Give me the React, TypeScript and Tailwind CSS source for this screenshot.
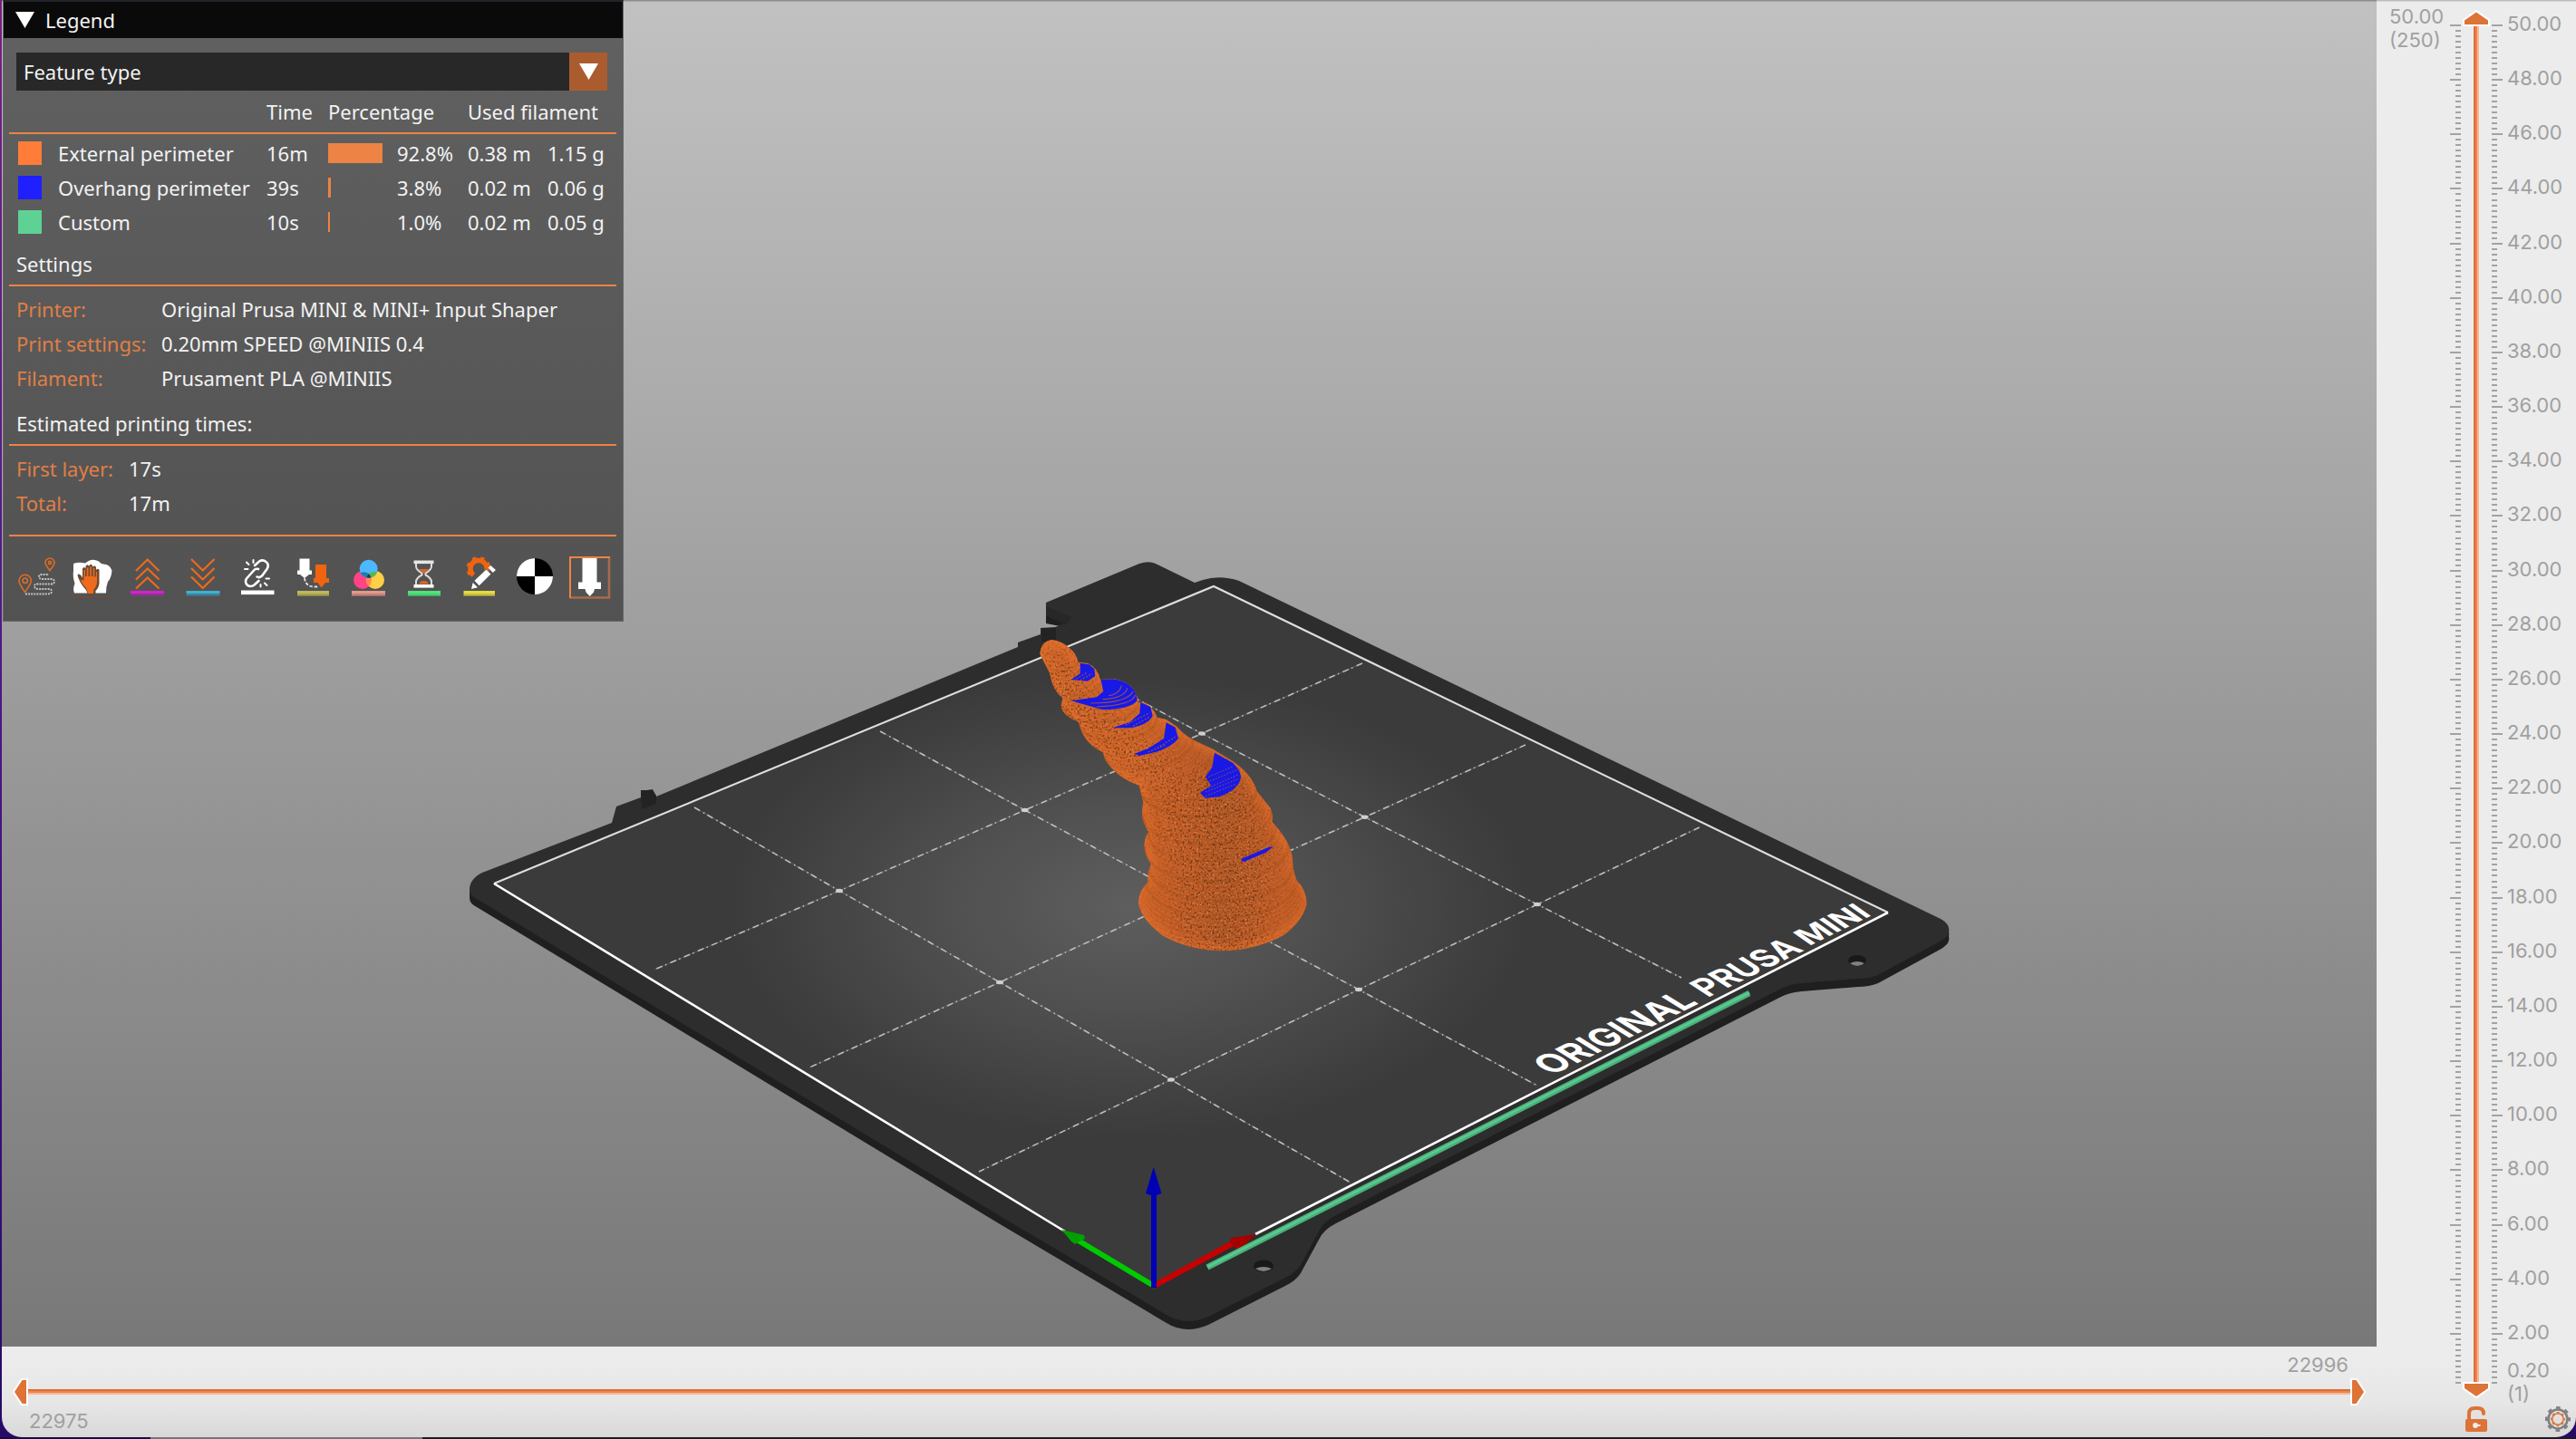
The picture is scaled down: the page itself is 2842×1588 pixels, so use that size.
import React from "react";

const ORANGE = "#ed8344";

/* ---------- toolbar icons (46 x 46 each) ---------- */

function Slot({ children }: { children: React.ReactNode }) {
  return (
    <svg className="h-[46px] w-[46px] shrink-0 overflow-visible" viewBox="0 0 46 46" fill="none">
      {children}
    </svg>
  );
}

function Underline({ top, bottom, x = 4, w = 37 }: { top: string; bottom: string; x?: number; w?: number }) {
  return (
    <>
      <rect x={x} y="38" width={w} height="3" fill={top} />
      <rect x={x} y="41" width={w} height="2.6" fill={bottom} />
    </>
  );
}

function ToolIcons() {
  return (
    <div className="flex gap-[15px]">
      <Slot>
        <g stroke="#dd6c24" strokeWidth="1.6">
          <path d="M9.5 39.5C6 34 3 30.500 3 27a6.700 6.700 0 0 1 13.400 0c0 3.500-3.400 7-6.900 12.500Z" />
          <circle cx="9.700" cy="26.700" r="2.700" />
          <path d="M37 15.500C34.500 12 32 9.500 32 7a5 5 0 0 1 10 0c0 2.500-2.500 5-5 8.500Z" />
          <circle cx="37" cy="7" r="1.600" />
        </g>
        <path
          d="M10 41.500H34q5 0 5-3t-5-2.500H25q-5 0-5-3t4-2.500H38q4 0 4-2.700t-4-2.800H29q-4 0-4-2.500t3-2.500h8"
          stroke="#c4c4c4"
          strokeWidth="1.900"
          strokeDasharray="2 1.100"
        />
      </Slot>
      <Slot>
        <path
          d="M2 8q6-2 13-.5Q22 1 30 5.500q2 2.500 5 3 7 0 9.500 7-.500 8-4.500 12.500-2 5-2 12.500H3Q1 36 3.500 30 1 22 2 16Z"
          fill="#fff"
        />
        <path
          d="M12 25V13.500q1.800-3 3.500 0V11q1.800-3.500 3.700 0v-.6q2-3.400 4 0V12q2-2.800 3.800 0v3q1.900-2.300 3.500 0v14q0 5-4 9v3q-5 2-9 0-1.500-5-5-8-3-4-5-9-2-5 .5-4.500 2.500.5 4 4Z"
          fill="#6b4a33"
        />
        <path
          d="M13.500 23V15h1.500v7h1.700V12.500h1.800V22h1.700V11.500h1.700V22h1.800v-9h1.600v9.500h1.600V17h1.200v10q0 6-3.700 9.500L24 41h-6l-2-6q-5-5-6-9.500l3.500 1Z"
          fill="#ee6a1c"
        />
        <rect x="1" y="44" width="40" height="1.600" fill="#7a4a34" opacity=".7" />
      </Slot>
      <Slot>
        <path d="M10 16 22.700 3.500 35.500 16M10 25.500 22.700 13.500 35.500 25.500M10 35.500 22.700 23.500 35.500 35.500" stroke="#ee6a1c" strokeWidth="2.200" />
        <Underline top="#d321d0" bottom="#8b358e" />
      </Slot>
      <Slot>
        <path d="M10 3 22.700 15.500 35.500 3M10 13 22.700 25.500 35.500 13M10 22.500 22.700 35 35.500 22.500" stroke="#ee6a1c" strokeWidth="2.200" />
        <Underline top="#3fb1cf" bottom="#417f98" x={4.500} />
      </Slot>
      <Slot>
        <g stroke="#fff" strokeWidth="2.600" strokeLinecap="round">
          <path d="m19 10 5-4.500q4-2.500 7.500.500 4 3 1 8L27 21.500q-3 2.500-5.500 1" />
          <path d="M23 14q-3-1-5 1.500L10 24.500q-2.500 4 1 7.300 4 2.500 7.500-.3l5-4.500" />
          <path d="M8 14h3.500M10 6.500l2.500 2.500M17.500 4v3M31.500 24.500H35M30 29.500l2.500 2.500M25.500 31v2.500" strokeWidth="2" />
        </g>
        <rect x="4" y="37.500" width="36.500" height="4.600" fill="#fff" />
      </Slot>
      <Slot>
        <path d="M7.500 2.500h11v13H21V20h-3l-5 4-5-4H5v-4.500h2.500Z" fill="#fff" />
        <path d="M25 9h12v15h3v5h-4L31.500 34.500 27.500 29H23v-5h2Z" fill="#f0640f" />
        <path d="M13 24q1 9 10 9.500h5" stroke="#e4e4e4" strokeWidth="1.900" strokeDasharray="3.500 1.800" />
        <Underline top="#bfb75f" bottom="#a5a24d" x={5} w={35} />
      </Slot>
      <Slot>
        <circle cx="16" cy="26" r="10" fill="#ff4385" />
        <circle cx="30" cy="26" r="10" fill="#ffcf45" />
        <circle cx="22.700" cy="13.800" r="10" fill="#4db8ff" />
        <path d="M22.900 18.800a10 10 0 0 1 .1 14.300 10 10 0 0 1-.1-14.300Z" fill="#ff8a50" />
        <path d="M13.600 18a10 10 0 0 1 9.300 1.100 10 10 0 0 0-2.500 4.400A10 10 0 0 1 13.600 18Z" fill="#1b7fb4" />
        <path d="M32 17.700a10 10 0 0 0-9.100 1.400 10 10 0 0 1 2.500 4.400A10 10 0 0 0 32 17.700Z" fill="#58b94b" />
        <path d="M22.900 19a10 10 0 0 1 2.500 4.500 10 10 0 0 1-5 0 10 10 0 0 1 2.500-4.500Z" fill="#163a5c" />
        <Underline top="#e09a8c" bottom="#c78078" />
      </Slot>
      <Slot>
        <rect x="11.500" y="4.500" width="22" height="3.600" fill="#e6e6e6" />
        <rect x="11.500" y="31" width="22" height="3.600" fill="#fff" />
        <path
          d="M14 8v3q0 4 6.500 7.500v2Q14 24 14 28v3M31 8v3q0 4-6.500 7.500v2Q31 24 31 28v3"
          stroke="#dcdcdc"
          strokeWidth="2"
        />
        <path d="M17 14h11q-2 3-5.500 4.500Q19 17 17 14ZM17 30.500q1-3.300 5.500-3.500 4.500.200 5.500 3.500Z" fill="#d9652a" />
        <Underline top="#4ee37c" bottom="#45d170" x={5} w={36} />
      </Slot>
      <Slot>
        <circle cx="22" cy="13.500" r="9" stroke="#f0640f" strokeWidth="5.500" strokeDasharray="40 17" transform="rotate(128 22 13.500)" />
        <circle cx="22" cy="13.500" r="12.200" stroke="#f0640f" strokeWidth="2.600" strokeDasharray="4.400 5.200 4.400 5.200 4.400 5.200 4.400 5.200 4.400 60" transform="rotate(145 22 13.500)" />
        <path d="m13 37 2.200-8.500L30 13.500l7 6.500-15.500 14.500Z" fill="#555" />
        <path d="m14 36 1.700-7 5.300 5.200ZM17.500 26.800 30.500 14.500l5 5-12.800 12.700ZM32.500 12.500l2.800-2.500 5.700 5-3.200 3Z" fill="#fff" />
        <Underline top="#e3dc3f" bottom="#c9bd45" x={5.500} w={34.500} />
      </Slot>
      <Slot>
        <circle cx="23" cy="22" r="20" fill="#000" />
        <path d="M23 22V2A20 20 0 0 0 3 22ZM23 22v20A20 20 0 0 0 43 22Z" fill="#fff" />
      </Slot>
      <Slot>
        <path d="M44 1v44.500H1" stroke="#a56c4b" strokeWidth="2.600" />
        <path d="M1 46V1h44" stroke={ORANGE} strokeWidth="2" />
        <path d="M14.500 2h16v26.500H35V36h-7l-1 3.500-4.300 4.500-4.200-4.500-1-3.500H10v-7.500h4.500Z" fill="#fff" />
      </Slot>
    </div>
  );
}

/* ---------- legend ---------- */

const features = [
  { swatch: "bg-[#ff7d38]", name: "External perimeter", time: "16m", bar: "w-[60px]", pct: "92.8%", len: "0.38 m", mass: "1.15 g" },
  { swatch: "bg-[#1f1fff]", name: "Overhang perimeter", time: "39s", bar: "w-[3px]", pct: "3.8%", len: "0.02 m", mass: "0.06 g" },
  { swatch: "bg-[#5ed194]", name: "Custom", time: "10s", bar: "w-[2px]", pct: "1.0%", len: "0.02 m", mass: "0.05 g" },
];

const settings = [
  ["Printer:", "Original Prusa MINI & MINI+ Input Shaper"],
  ["Print settings:", "0.20mm SPEED @MINIIS 0.4"],
  ["Filament:", "Prusament PLA @MINIIS"],
];

const times = [
  ["First layer:", "17s"],
  ["Total:", "17m"],
];

function Rule() {
  return <div className="mr-[7px] ml-[6px] h-[2px] bg-[#ed8344]" />;
}

function Legend() {
  return (
    <section className="absolute left-px top-0 flex h-[686px] w-[685px] flex-col border border-[#64646c] border-t-2 border-t-[#23232b] bg-linear-to-b from-[#616161] to-[#525252] font-['Noto_Sans',sans-serif] text-[22px] leading-[36px] text-[#f2f2f2]">
      <header className="flex h-[40px] items-center bg-[#0a0a0a] pb-px pl-[13px]">
        <svg className="h-[18px] w-[21px]" viewBox="0 0 21 18">
          <path d="M0 0h21L10.500 18Z" fill="#fff" />
        </svg>
        <span className="ml-[12px]">Legend</span>
      </header>
      <div className="ml-[14px] mt-[16px] flex h-[42px] w-[652px] items-center bg-[#282828]">
        <span className="flex-1 pl-[8px]">Feature type</span>
        <span className="flex h-full w-[42px] items-center justify-center bg-[#ab5c2f]">
          <svg className="h-[18px] w-[21px]" viewBox="0 0 21 18">
            <path d="M0 0h21L10.500 18Z" fill="#fff" />
          </svg>
        </span>
      </div>
      <div className="mt-[5px] grid h-[41px] grid-cols-[290px_68px_154px_1fr]">
        <span />
        <span>Time</span>
        <span>Percentage</span>
        <span>Used filament</span>
      </div>
      <Rule />
      <div className="mt-[3px]">
        {features.map((f) => (
          <div key={f.name} className="grid h-[38px] grid-cols-[60px_230px_68px_75px_79px_88px_1fr] items-start">
            <span className={`mt-[5px] ml-[16px] h-[26px] w-[26px] ${f.swatch}`} />
            <span>{f.name}</span>
            <span>{f.time}</span>
            <span className={`mt-[7px] h-[22px] bg-[#ed8344] ${f.bar}`} />
            <span className="pl-px">{f.pct}</span>
            <span>{f.len}</span>
            <span>{f.mass}</span>
          </div>
        ))}
      </div>
      <h2 className="mt-[8px] h-[41px] pl-[14px]">Settings</h2>
      <Rule />
      <dl className="mt-[7px]">
        {settings.map(([k, v]) => (
          <div key={k} className="grid h-[38px] grid-cols-[160px_1fr] pl-[14px]">
            <dt className="text-[#e07f45]">{k}</dt>
            <dd>{v}</dd>
          </div>
        ))}
      </dl>
      <h2 className="mt-[12px] h-[41px] pl-[14px]">Estimated printing times:</h2>
      <Rule />
      <dl className="mt-[7px]">
        {times.map(([k, v]) => (
          <div key={k} className="grid h-[38px] grid-cols-[124px_1fr] pl-[14px]">
            <dt className="text-[#e07f45]">{k}</dt>
            <dd>{v}</dd>
          </div>
        ))}
      </dl>
      <div className="h-[15px]" />
      <Rule />
      <div className="mt-[22px] pl-[14px]">
        <ToolIcons />
      </div>
    </section>
  );
}

/* ---------- 3D viewport ---------- */

const PLATE =
  "M518 982Q518 970 532 963L675 908 680 890 707 880V873L720 871 724 879 1123 714V709L1148 700V693L1164 692 1172 689 1180 684 1154 679V665L1257 622Q1268 618 1277 623L1318 643 1327 640Q1346 634 1367 641L1600 753 2141 1014Q2152 1020 2150 1029 2149 1034 2140 1039L2072 1076Q2062 1080 2050 1080L1988 1085Q1975 1086 1965 1091L1474 1341Q1460 1348 1455 1359L1435 1396Q1430 1404 1418 1410L1333 1453Q1308 1464 1287 1451L1100 1340 526 992Q518 988 518 982Z";

const BED = "M545 975 1339 647 2083 1007 1273 1419Z";

const GRID = [
  "M766 891 926 983 1103 1084 1292 1191.500 1490 1305",
  "M971 807 1130.700 894 1309 990 1499 1092 1696 1198",
  "M1163 723 1326 809.500 1505.700 901.700 1696 998 1855 1079",
  "M1503 732 1326 809.500 1130.700 894 926 983 722 1070",
  "M1683 822 1505.700 901.700 1309 990 1103 1084 893 1178",
  "M1875 913 1696 998 1499 1092 1292 1191.500 1080 1293",
];

const NODES = [
  [926, 983], [1103, 1084], [1292, 1191.5], [1130.7, 894], [1499, 1092],
  [1326, 809.5], [1505.7, 901.7], [1696, 998],
];

const MODEL =
  "M142 365Q145 325 180 318 215 322 235 342 262 360 268 392L300 396Q335 412 341 450L390 448Q460 462 468 525L490 526Q520 545 530 575L560 582 595 605Q620 635 660 655L715 680 780 720Q845 765 860 820L905 875Q915 900 910 920 970 985 978 1040 978 1080 992 1115 1025 1145 1025 1195 1010 1250 950 1295 860 1345 745 1348 630 1345 545 1295 475 1240 468 1190 468 1150 500 1120 496 1090 510 1060 485 1030 488 990 492 965 502 955 478 920 480 885L484 855 470 800Q395 775 358 715L350 690Q285 660 270 590 215 570 212 535L218 510Q185 490 175 430Z";

const SECTIONS = [
  [470, 1205, 1025, 1205],
  [492, 1110, 992, 1110],
  [500, 1060, 980, 1060],
  [488, 1000, 965, 990],
  [500, 955, 925, 930],
  [480, 890, 908, 880],
  [470, 800, 858, 810],
  [400, 760, 800, 740],
  [350, 690, 650, 645],
  [270, 590, 530, 575],
  [215, 530, 470, 520],
  [185, 470, 345, 450],
  [165, 400, 270, 385],
  [145, 340, 225, 335],
];

const layerArcs: { d: string; tone: number }[] = [];
SECTIONS.slice(0, -1).forEach((a, i) => {
  const b = SECTIONS[i + 1];
  const steps = Math.max(6, Math.round(Math.abs(b[1] - a[1]) / 7));
  for (let s = 0; s < steps; s++) {
    const t = s / steps;
    const [x1, y1, x2, y2] = a.map((v, k) => v + (b[k] - v) * t);
    const h = (x2 - x1) * 0.34;
    layerArcs.push({
      d: `M${x1.toFixed(1)} ${y1.toFixed(1)}C${x1.toFixed(1)} ${(y1 + h).toFixed(1)} ${x2.toFixed(1)} ${(y2 + h).toFixed(1)} ${x2.toFixed(1)} ${y2.toFixed(1)}`,
      tone: s === 0 ? 2 : s % 2,
    });
  }
});

const SPINE = "M190 420 260 520 400 650 560 780 690 900 740 1040 750 1240";

const OVERHANGS = [
  "M275 395 305 400 322 415 325 438 300 455 245 450 275 430Z",
  "M343 448 385 448Q440 455 460 485L464 520Q440 548 350 550L245 520 330 508 352 488Z",
  "M475 525 508 540 515 570Q500 600 440 610L383 610 440 590 472 562Z",
  "M560 592 590 608 600 645Q580 672 525 690L470 702 455 695 500 678 552 645Z",
  "M720 692 780 725Q812 755 806 780 795 815 735 838L690 842 672 825 708 800 690 772 712 740Z",
  "M806 1045 900 1004 915 1002 890 1022 815 1054Z",
];

function Word({ x, y, len, cx, cy, n, children }: { x: number; y: number; len: number; cx: number; cy: number; n: number; children: string }) {
  const a = len / n;
  return (
    <text
      transform={`matrix(${a} ${-a * 0.49} ${cx / 72.7} ${cy / 72.7} ${x} ${y})`}
      textLength={n}
      lengthAdjust="spacingAndGlyphs"
      fontSize="100"
      fontWeight="700"
      fill="#fff"
      className="font-['Inter',sans-serif]"
    >
      {children}
    </text>
  );
}

function Viewport() {
  return (
    <svg className="block h-[1486px] w-[2620px]" viewBox="2 0 2620 1486" fill="none">
      <defs>
        <linearGradient id="sky" x1="0" y1="0" x2="0" y2="1">
          <stop offset="0" stopColor="#c1c1c1" />
          <stop offset="1" stopColor="#787878" />
        </linearGradient>
        <radialGradient id="glow" gradientUnits="userSpaceOnUse" cx="0" cy="0" r="1" gradientTransform="translate(1245 1000) scale(440 255)">
          <stop offset="0" stopColor="#5e5e5e" />
          <stop offset=".45" stopColor="#505050" />
          <stop offset="1" stopColor="#3b3b3b" />
        </radialGradient>
        <linearGradient id="model" gradientUnits="userSpaceOnUse" x1="470" y1="0" x2="1025" y2="0">
          <stop offset="0" stopColor="#cf652a" />
          <stop offset=".22" stopColor="#c45e28" />
          <stop offset=".5" stopColor="#b25927" />
          <stop offset=".85" stopColor="#c45e28" />
          <stop offset="1" stopColor="#bd5a24" />
        </linearGradient>
        <clipPath id="modelClip">
          <path d={MODEL} />
        </clipPath>
        <filter id="grain" x="0" y="0" width="100%" height="100%" colorInterpolationFilters="sRGB">
          <feTurbulence type="fractalNoise" baseFrequency=".15" numOctaves="1" seed="4" />
          <feColorMatrix values="0 0 0 0 .36  0 0 0 0 .18  0 0 0 0 .07  9 0 0 0 -4.900" />
        </filter>
        <filter id="spark" x="0" y="0" width="100%" height="100%" colorInterpolationFilters="sRGB">
          <feTurbulence type="fractalNoise" baseFrequency=".15" numOctaves="1" seed="19" />
          <feColorMatrix values="0 0 0 0 .86  0 0 0 0 .56  0 0 0 0 .34  0 10 0 0 -6" />
        </filter>
        <filter id="soft" filterUnits="userSpaceOnUse" x="0" y="200" width="1200" height="1300">
          <feGaussianBlur stdDeviation="14" />
        </filter>
        <filter id="feather" filterUnits="userSpaceOnUse" x="0" y="200" width="1200" height="1300">
          <feGaussianBlur stdDeviation="34" />
        </filter>
        <mask id="spineMask" maskUnits="userSpaceOnUse" x="100" y="300" width="950" height="1070">
          <rect x="100" y="300" width="950" height="1070" fill="#303030" />
          <g filter="url(#feather)">
            <path d={SPINE} stroke="#fff" strokeWidth="120" strokeLinejoin="round" strokeLinecap="round" />
            <path d="M690 900 740 1040 750 1240" stroke="#fff" strokeWidth="320" strokeLinecap="round" />
          </g>
        </mask>
      </defs>

      <rect x="2" width="2620" height="1486" fill="url(#sky)" />
      <rect x="2" width="2620" height="1.500" fill="#8b8b8b" />

      <path d={PLATE} fill="#232323" transform="translate(0 4)" />
      <path d={PLATE} fill="#1f1f1f" transform="translate(0 9)" />
      <path d={PLATE} fill="#2d2d2d" />
      <path d="M1154 679V669L1182 681 1176 690Z" fill="#272727" />
      <path d="M1149 693h16v15h-16ZM707 872h13l4 6v9l-16 6Z" fill="#232323" />
      {[
        [1394, 1397, 11],
        [2049, 1060, 10],
      ].map(([x, y, r]) => (
        <g key={x}>
          <ellipse cx={x} cy={y} rx={r} ry={r * 0.6} fill="#191919" />
          <path d={`M${x - r + 2} ${y + 3}q${r - 2}-4 ${2 * r - 4} 0-${r - 2} 6-${2 * r - 4} 0Z`} fill="#808080" />
        </g>
      ))}

      <path d={BED} fill="url(#glow)" />
      {GRID.map((d) => (
        <g key={d}>
          <path d={d} stroke="#8f8f8f" strokeWidth="1.200" strokeOpacity=".35" />
          <path d={d} stroke="#bdbdbd" strokeWidth="1.600" strokeDasharray="7 4.500 1.500 3.500" />
        </g>
      ))}
      {NODES.map(([x, y]) => (
        <ellipse key={x} cx={x} cy={y} rx="4" ry="2.200" fill="#cfcfcf" />
      ))}
      <path d="M545 975 1339 647 2083 1007" stroke="#dedede" strokeWidth="2.100" />
      <path d="M2083 1007 1385 1362M545 975 1175 1359" stroke="#fff" strokeWidth="2.600" />

      <Word x={1712} y={1187} len={163} cx={25} cy={15.5} n={500}>ORIGINAL</Word>
      <Word x={1884} y={1101} len={107} cx={23} cy={15} n={350}>PRUSA</Word>
      <Word x={1996} y={1044} len={70} cx={20} cy={14} n={260}>MINI</Word>

      <g transform="translate(1100 600) scale(.33333)">
        <path d={MODEL} fill="url(#model)" />
        <g clipPath="url(#modelClip)">
          <path d={MODEL} stroke="#ee7631" strokeWidth="34" opacity=".6" filter="url(#soft)" />
          {layerArcs.map((a, i) => (
            <path
              key={i}
              d={a.d}
              stroke={a.tone === 2 ? "#8f4318" : a.tone ? "#dc6a2a" : "#9c4b1c"}
              strokeWidth={a.tone === 2 ? 9 : 3}
              opacity={a.tone === 2 ? 0.22 : 0.26}
            />
          ))}
          <g mask="url(#spineMask)">
            <rect x="100" y="300" width="950" height="1070" filter="url(#grain)" opacity=".6" />
            <rect x="100" y="300" width="950" height="1070" filter="url(#spark)" opacity=".6" />
          </g>
          <g fill="#1919e6">
            {OVERHANGS.map((d) => (
              <path key={d} d={d} />
            ))}
          </g>
          <g stroke="#a85a3c" strokeWidth="3.500" opacity=".85">
            <path d="M310 528Q430 528 450 490M330 540Q450 535 458 500M350 515Q420 512 432 478M370 503Q405 498 412 470" />
            <path d="M262 448 300 425M275 452 315 430M425 600 505 560M450 604 508 572M520 682 590 640M500 690 560 665" strokeDasharray="6 5" />
            <path d="M690 836 790 796M690 822 796 780M700 808 800 764M696 790 796 748M700 772 780 738" strokeDasharray="5 5" strokeWidth="3" />
          </g>
        </g>
      </g>

      <path d="M1362 1371 1273 1419" stroke="#c80000" strokeWidth="6" />
      <path d="M1386 1362 1358 1366 1357 1372 1365 1379 1370 1377Z" fill="#a60000" />
      <path d="M1332 1398.500 1930 1096" stroke="#49b07a" strokeWidth="6.500" />
      <path d="M1332 1398 1930 1095.500" stroke="#5cc990" strokeWidth="2.600" />
      <path d="M1188 1368 1273 1419" stroke="#00cb00" strokeWidth="6" />
      <path d="M1171 1357 1196 1363 1197 1367 1189 1371 1186 1373 1182 1370Z" fill="#00a000" />
      <path d="M1273 1421V1317" stroke="#0000b4" strokeWidth="6" />
      <path d="M1272.700 1288 1281.500 1317Q1273 1321 1264 1317Z" fill="#0000b4" />
    </svg>
  );
}

/* ---------- sliders ---------- */

const LAYERS = 250;
const tickY = (layer: number) => 28 + (LAYERS - layer) * 6.016;

function LayerRuler() {
  const ticks = Array.from({ length: LAYERS }, (_, i) => i + 1);
  return (
    <svg className="block h-[1586px] w-[220px]" viewBox="2622 0 220 1586" fill="none">
      <rect x="2622" width="220" height="1.500" fill="#bdbdbd" />
      {ticks.map((n) => {
        const long = n % 10 === 0;
        const y = Math.round(tickY(n)) - 1;
        return (
          <g key={n} fill="#a3a3a3">
            <rect x={long ? 2703 : 2709} y={y} width={long ? 12 : 6} height="2" />
            <rect x="2749" y={y} width={long ? 12 : 6} height="2" />
          </g>
        );
      })}
      <g className="font-['Inter',sans-serif]" fontSize="22" fill="#a0a0a0">
        <text x="2636" y="26">50.00</text>
        <text x="2636" y="52">(250)</text>
        {Array.from({ length: 25 }, (_, i) => 50 - i * 2).map((mm) => (
          <text key={mm} x="2766" y={Math.round(tickY(mm * 5)) + 6}>
            {mm.toFixed(2)}
          </text>
        ))}
        <text x="2766" y="1520">0.20</text>
        <text x="2766" y="1546">(1)</text>
      </g>
      <rect x="2729" y="28" width="2" height="1498" fill="#dc7035" />
      <rect x="2731" y="28" width="2" height="1498" fill="#ed8351" />
      <rect x="2733" y="28" width="2" height="1498" fill="#f8b596" />
      <g fill="#dd7336" stroke="#fff" strokeWidth="4" paintOrder="stroke">
        <path d="M2732 13.500 2745 22.500V27H2719V22.500Z" />
        <path d="M2732 1541 2745 1532V1527H2719V1532Z" />
      </g>
      <path d="M2724 1567V1560Q2724 1554 2730 1554H2734Q2740 1554 2740 1560" stroke="#dd7336" strokeWidth="4" strokeLinecap="round" />
      <rect x="2720" y="1566" width="24" height="14" rx="2" fill="#dd7336" />
      <circle cx="2731" cy="1573" r="2.900" fill="#ececec" />
      <rect x="2732" y="1572" width="4.500" height="2" fill="#ececec" />
      <circle cx="2822" cy="1566" r="10.500" stroke="#808080" strokeWidth="2.600" />
      <circle cx="2822" cy="1566" r="12.600" stroke="#808080" strokeWidth="2.800" strokeDasharray="4.600 5.296" strokeDashoffset="2.300" />
      <circle cx="2822" cy="1566" r="6.200" stroke="#dd7336" strokeWidth="1.600" />
      <circle cx="2822" cy="1566" r="7.300" stroke="#dd7336" strokeWidth="1.600" strokeDasharray="2.500 3.233" strokeDashoffset="1.250" />
    </svg>
  );
}

function MoveSlider() {
  return (
    <div className="flex h-[100px] flex-col px-[12px] font-['Inter',sans-serif] text-[22px] leading-[26px] text-[#a0a0a0]">
      <div className="mt-[7px] mb-px flex h-[26px] justify-end pr-[19px]">22996</div>
      <svg className="block h-[32px] w-[2596px]" viewBox="14 1520 2596 32">
        <rect x="29" y="1533" width="2566" height="2" fill="#dd6f35" />
        <rect x="29" y="1535" width="2566" height="2" fill="#ed8351" />
        <rect x="29" y="1537" width="2566" height="2" fill="#f6b898" />
        <g fill="#dd7336" stroke="#fff" strokeWidth="4" paintOrder="stroke">
          <path d="M16 1536 24.500 1523H29V1549H24.500Z" />
          <path d="M2608 1536 2599.500 1523H2595V1549H2599.500Z" />
        </g>
      </svg>
      <div className="mt-[3px] pl-[18px]">22975</div>
    </div>
  );
}

export default function App() {
  return (
    <div className="flex h-[1588px] w-[2842px] flex-col overflow-hidden bg-[#171c26]">
      <div className="flex h-[1586px] bg-linear-to-b from-[#74227c] via-[#4c1688] to-[#260b66] pl-[2px]">
        <div className="flex flex-1 overflow-hidden rounded-b-[22px] bg-[linear-gradient(to_bottom,#ececec_0,#ececec_1500px,#e6e6e6_1550px,#d8d8d8_1586px)]">
          <div className="flex w-[2620px] flex-col">
            <main className="relative h-[1486px]">
              <Viewport />
              <Legend />
            </main>
            <MoveSlider />
          </div>
          <LayerRuler />
        </div>
      </div>
      <div className="flex h-[2px]">
        <div className="w-[166px] bg-[#1a0a4c]" />
        <div className="w-[300px] bg-[#767478]" />
        <div className="flex-1 bg-[#171c26]" />
      </div>
    </div>
  );
}
